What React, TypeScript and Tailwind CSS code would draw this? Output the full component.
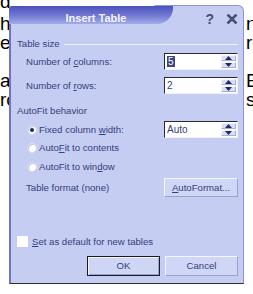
import React from "react";

function Spinner() {
  return (
    <div className="flex h-full w-[16px] shrink-0 flex-col gap-px py-px pr-px">
      <div className="flex flex-1 items-center justify-center border border-t-[#f4f5ff] border-l-[#f4f5ff] border-r-[#a9aed6] border-b-[#a9aed6] bg-[#d9ddf5]">
        <svg width="7" height="4" viewBox="0 0 7 4">
          <path d="M0 4 L3.5 0 L7 4 Z" fill="#1f2a66" />
        </svg>
      </div>
      <div className="flex flex-1 items-center justify-center border border-t-[#f4f5ff] border-l-[#f4f5ff] border-r-[#a9aed6] border-b-[#a9aed6] bg-[#d9ddf5]">
        <svg width="7" height="4" viewBox="0 0 7 4">
          <path d="M0 0 L3.5 4 L7 0 Z" fill="#1f2a66" />
        </svg>
      </div>
    </div>
  );
}

function Input({ children }: { children: React.ReactNode }) {
  return (
    <div className="ml-auto flex h-[17px] w-[74px] shrink-0 items-center border border-t-[#2a2a36] border-l-[#2a2a36] border-r-[#eef0fb] border-b-[#eef0fb] bg-white">
      <div className="flex-1 pl-[2px] text-[10px] leading-[12px] text-[#34407a]">{children}</div>
      <Spinner />
    </div>
  );
}

function Radio({ checked }: { checked?: boolean }) {
  return (
    <div className="ml-[10px] flex h-[10px] w-[10px] shrink-0 items-center justify-center rounded-full border border-[#d6d9f0] bg-white shadow-[inset_1px_1px_1px_#b9bde0]">
      {checked && <div className="h-[4px] w-[4px] rounded-full bg-[#1e2a6a]" />}
    </div>
  );
}

function Btn({ children, def }: { children: React.ReactNode; def?: boolean }) {
  if (def) {
    return (
      <div className="flex h-[20px] w-[73px] items-center justify-center border border-[#1b1b22] bg-[#cfd5f4] shadow-[inset_1px_1px_0_#f2f4ff,inset_-1px_-1px_0_#9ba1cf]">
        {children}
      </div>
    );
  }
  return (
    <div className="flex h-[20px] w-[73px] items-center justify-center border border-t-[#f4f6ff] border-l-[#f4f6ff] border-r-[#9ba1cf] border-b-[#9ba1cf] bg-[#d0d6f5]">
      {children}
    </div>
  );
}

export default function App() {
  const docRows: [string, string][] = [
    ["h", "n"],
    ["e", "re"],
    ["", ""],
    ["a", "E"],
    ["rc", "si"],
  ];
  return (
    <div className="relative h-[294px] w-[253px] overflow-hidden bg-white font-['Liberation_Sans',Arial,sans-serif]">
      {/* document behind */}
      <div className="-mt-[8px] flex flex-col text-[19px] leading-[19px] text-black">
        <div className="flex h-[22px]">
          <span className="w-[246px] shrink-0">d</span>
        </div>
        {docRows.map(([l, r], i) => (
          <div key={i} className="flex h-[19px]">
            <span className="w-[246px] shrink-0">{l}</span>
            <span className="whitespace-nowrap">{r}</span>
          </div>
        ))}
      </div>

      {/* dialog */}
      <div className="absolute left-[9px] top-[5px] flex h-[279px] w-[235px] flex-col text-[9.6px] leading-[12px] text-[#34407a]">
        <div className="flex h-[19px] shrink-0">
          <div className="relative z-10 mt-[1px] h-[18px] w-[164px] shrink-0 rounded-tl-[3px] rounded-br-[16px] bg-gradient-to-b from-[#4b52bb] via-[#6f76d1] to-[#a4abea] pl-[10px] pt-[6px] text-center text-[11px] font-bold leading-[13px] text-[#f3f4ff]">
            Insert Table
          </div>
          <div className="-ml-[24px] flex flex-1 items-start justify-end rounded-tl-[8px] rounded-tr-[6px] border-r border-t border-[#8c92da] bg-[#c6cdf2] pr-[5px] pt-[6px]">
            <span className="text-[14px] font-bold leading-[14px] text-[#4a5070]">?</span>
            <svg className="ml-[12px] mt-[2px]" width="12" height="10" viewBox="0 0 12 10">
              <path d="M1.5 0.5 L10.5 9.5 M10.5 0.5 L1.5 9.5" stroke="#4a5070" strokeWidth="2.6" />
            </svg>
          </div>
        </div>

        <div className="flex flex-1 flex-col border-b border-l-2 border-r border-b-[#2c2c34] border-l-[#6c73c9] border-r-[#8c93d9] bg-[#c6cdf2] pl-[6px] pr-[5px]">
          <div className="mt-[14px] flex h-[12px] items-center">
            <span>Table size</span>
            <div className="ml-[4px] h-px flex-1 bg-[#eef0ff]" />
          </div>

          <div className="mt-[3px] flex h-[17px] items-center">
            <span className="ml-[9px] pt-[1px]">
              Number of <span className="underline">c</span>olumns:
            </span>
            <Input>
              <span className="bg-[#3c4680] px-px text-white">5</span>
            </Input>
          </div>

          <div className="mt-[7px] flex h-[17px] items-center">
            <span className="ml-[9px] pt-[1px]">
              Number of <span className="underline">r</span>ows:
            </span>
            <Input>2</Input>
          </div>

          <div className="mt-[11px] flex h-[12px] items-center">
            <span>AutoFit behavior</span>
          </div>

          <div className="mt-[4px] flex h-[17px] items-center">
            <Radio checked />
            <span className="ml-[2px]">
              Fixed column <span className="underline">w</span>idth:
            </span>
            <Input>Auto</Input>
          </div>

          <div className="flex h-[19px] items-center">
            <Radio />
            <span className="ml-[2px]">
              Auto<span className="underline">F</span>it to contents
            </span>
          </div>

          <div className="flex h-[19px] items-center">
            <Radio />
            <span className="ml-[2px]">
              AutoFit to win<span className="underline">d</span>ow
            </span>
          </div>

          <div className="mt-[2px] flex h-[19px] items-center">
            <span className="ml-[9px]">Table format (none)</span>
            <div className="ml-auto flex h-[19px] w-[74px] items-center justify-center border border-t-[#f4f6ff] border-l-[#f4f6ff] border-r-[#9ba1cf] border-b-[#9ba1cf] bg-[#d0d6f5]">
              <span>
                <span className="underline">A</span>utoFormat...
              </span>
            </div>
          </div>

          <div className="mt-[36px] flex h-[17px] items-center">
            <div className="h-[11px] w-[11px] shrink-0 bg-white" />
            <span className="ml-[4px]">
              <span className="underline">S</span>et as default for new tables
            </span>
          </div>

          <div className="mt-[6px] flex justify-end gap-[5px]">
            <Btn def>OK</Btn>
            <Btn>Cancel</Btn>
          </div>
        </div>
      </div>
    </div>
  );
}
